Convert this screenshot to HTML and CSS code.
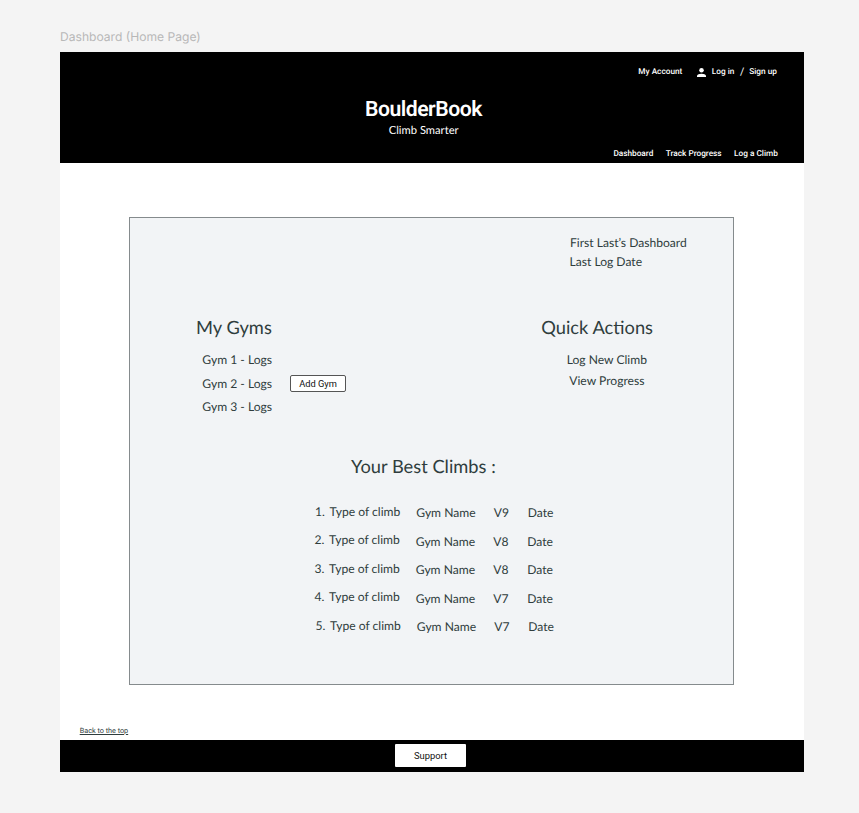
FILE: index.html
```
<!DOCTYPE html>
<html lang="en">
<head>
<meta charset="utf-8">
<title>BoulderBook</title>
<link rel="stylesheet" href="styles.css">
</head>
<body>
<div class="frame-label">Dashboard (Home Page)</div>
<div class="frame">
  <header class="header">
    <div class="account">
      <a class="my-account">My Account</a>
      <svg class="person" viewBox="0 0 16 16"><circle cx="8" cy="4" r="4"/><path d="M0 16v-2c0-2.700 5.300-4 8-4s8 1.300 8 4v2z"/></svg>
      <a>Log in</a><span class="slash">/</span><a>Sign up</a>
    </div>
    <h1 class="brand">BoulderBook</h1>
    <p class="tagline">Climb Smarter</p>
    <nav class="nav"><a>Dashboard</a><a>Track Progress</a><a>Log a Climb</a></nav>
  </header>
  <main class="main">
    <section class="panel">
      <div class="owner"><p>First Last’s Dashboard</p><p>Last Log Date</p></div>
      <div class="columns">
        <div class="gyms">
          <h2>My Gyms</h2>
          <ul>
            <li>Gym 1 - Logs</li>
            <li>Gym 2 - Logs <button class="add">Add Gym</button></li>
            <li>Gym 3 - Logs</li>
          </ul>
        </div>
        <div class="actions">
          <h2>Quick Actions</h2>
          <p>Log New Climb</p>
          <p>View Progress</p>
        </div>
      </div>
      <h2 class="best-title">Your Best Climbs :</h2>
      <div class="best">
        <div class="climb first"><span>1.</span><span>Type of climb</span><span>Gym Name</span><span>V9</span><span>Date</span></div>
        <div class="climb"><span>2.</span><span>Type of climb</span><span>Gym Name</span><span>V8</span><span>Date</span></div>
        <div class="climb"><span>3.</span><span>Type of climb</span><span>Gym Name</span><span>V8</span><span>Date</span></div>
        <div class="climb"><span>4.</span><span>Type of climb</span><span>Gym Name</span><span>V7</span><span>Date</span></div>
        <div class="climb last"><span>5.</span><span>Type of climb</span><span>Gym Name</span><span>V7</span><span>Date</span></div>
      </div>
    </section>
    <a class="top-link">Back to the top</a>
  </main>
  <footer class="footer"><button class="support">Support</button></footer>
</div>
</body>
</html>
```
FILE: styles.css
```
* { box-sizing: border-box; }
body { margin: 0; height: 813px; padding: 28px 0 0 60px; background: #f4f4f4; font-family: Lato, sans-serif; color: #2f3d3d; overflow: hidden; text-rendering: geometricPrecision; }
h1, h2, p, ul { margin: 0; padding: 0; font-weight: 400; list-style: none; }
.frame-label { height: 24px; font: 12.1px/18px Inter, sans-serif; color: #b8b8b8; }
.frame { width: 744.4px; background: #fff; }
.header { height: 110.5px; padding-top: 12px; background: #000; color: #fff; }
.account, .nav { display: flex; justify-content: flex-end; height: 16px; font: 500 8.25px/16px Roboto, sans-serif; white-space: nowrap; }
.account { align-items: center; padding-right: 27.500px; }
.my-account { margin-right: 15px; }
.person { width: 9px; height: 9px; margin-right: 5.500px; fill: #fff; }
.slash { margin: 0 5px 0 5.5px; font-size: 10.5px; font-weight: 400; }
.brand { margin: 18px 17.500px 0 0; text-align: center; font: 600 21.2px/24px Roboto, sans-serif; letter-spacing: -.5px; }
.tagline { margin: 1px 17px 0 0; text-align: center; font-size: 11.2px; line-height: 16px; }
.nav { gap: 12.5px; margin-top: 7px; padding-right: 26.5px; }
.main { height: 577px; padding: 54.5px 0 0 69px; }
.panel { width: 605px; height: 468px; padding-top: 15px; border: 1px solid #858b8d; background: #f2f4f6; font-size: 12.1px; }
.owner { margin-left: 440px; line-height: 20px; }
.owner p:last-child { margin: -1px 0 0 -.5px; }
.columns { display: flex; justify-content: space-between; margin-top: 43px; padding: 0 80px 0 66px; }
h2 { font-size: 18.3px; line-height: 24px; }
.gyms ul { margin: 8.5px 0 0 6.3px; }
.gyms li { display: flex; align-items: center; height: 23.8px; }
.add { width: 56px; height: 17px; margin-left: 18px; padding: 0; border: 1px solid #555; border-radius: 2px; background: #fff; color: #111; font: 9.3px/15px Roboto, sans-serif; }
.actions p { margin-top: 5.5px; text-align: center; padding-left: 19.5px; line-height: 16px; }
.actions h2 + p { margin-top: 12.8px; }
.best-title { margin: 35.1px 0 0 221px; }
.best { margin: 26px 0 0 184.500px; }
.climb { display: grid; grid-template-columns: 14.6px 86.7px 77.5px 34px 40px; height: 28.5px; line-height: 16px; white-space: nowrap; }
.climb span:nth-child(n+3) { padding-top: 1.500px; }
.first { margin-left: .5px; }
.last { margin-left: 1px; }
.top-link { display: block; margin: 39.5px 0 0 -49.3px; font: 7.25px/12px Roboto, sans-serif; text-decoration: underline; }
.footer { height: 32px; padding: 4.500px 0 0 335px; background: #000; }
.support { display: block; width: 71px; height: 22.5px; padding: 0; border: 0; border-radius: 1px; background: #fff; color: #111; font: 9.4px/23px Roboto, sans-serif; }
```
